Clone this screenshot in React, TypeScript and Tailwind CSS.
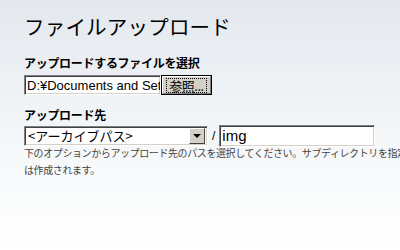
const jp = "font-['Noto_Sans_CJK_JP',sans-serif]"
const inset =
  'border border-t-[#808080] border-l-[#808080] border-r-white border-b-white shadow-[inset_1px_1px_0_#404040,inset_-1px_-1px_0_#d4d0c8] bg-white'

export default function App() {
  return (
    <div className={`w-[400px] h-[250px] overflow-hidden bg-gradient-to-b from-[#e3e8ee] via-[#f3f6f8] to-white text-black ${jp}`}>
      <div className="pl-6 pt-[11px]">
        <h1 className="text-[20.5px] leading-[30px] font-normal tracking-[0.2px]">ファイルアップロード</h1>

        <p className="mt-[15px] text-[12px] leading-[14px] font-bold tracking-[-0.3px]">アップロードするファイルを選択</p>
        <div className="mt-[5px] flex items-stretch h-[20px]">
          <div className={`w-[137px] ${inset} flex items-center pl-[2px] overflow-hidden`}>
            <span className="font-['Liberation_Sans',sans-serif] text-[13px] leading-[15px] whitespace-nowrap">D:¥Documents and Set</span>
          </div>
          <button className="w-[51px] bg-[#d4d0c8] border border-black flex items-center justify-center p-0">
            <span className="w-full h-full border border-t-white border-l-white border-r-[#808080] border-b-[#808080] flex items-center justify-center">
              <span className="outline outline-1 outline-dotted outline-black px-[2px] text-[13px] leading-[13px] tracking-[-0.5px]">参照...</span>
            </span>
          </button>
        </div>

        <p className="mt-[13px] text-[12px] leading-[14px] font-bold tracking-[-0.3px]">アップロード先</p>
        <div className="mt-[3px] flex items-center h-[21px]">
          <div className={`w-[184px] h-[20px] ${inset} flex items-center pl-[3px] pr-[2px]`}>
            <span className="flex-1 text-[13px] leading-[15px] whitespace-nowrap">&lt;アーカイブパス&gt;</span>
            <span className="w-[16px] h-[16px] bg-[#d4d0c8] border border-t-white border-l-white border-r-[#404040] border-b-[#404040] flex items-center justify-center">
              <span className="w-0 h-0 border-l-[4px] border-r-[4px] border-t-[4px] border-l-transparent border-r-transparent border-t-black" />
            </span>
          </div>
          <span className="mx-[4px] font-['Liberation_Sans',sans-serif] text-[12px]">/</span>
          <div className={`w-[156px] h-[22px] ${inset} flex items-center pl-[2px]`}>
            <span className="font-['Liberation_Sans',sans-serif] text-[15px] leading-[17px]">img</span>
          </div>
        </div>

        <div className="mt-[-2px] text-[10px] leading-[17px] text-[#444] tracking-[-0.4px]">
          <p className="whitespace-nowrap">下のオプションからアップロード先のパスを選択してください。サブディレクトリを指定</p>
          <p>は作成されます。</p>
        </div>
      </div>
    </div>
  )
}
